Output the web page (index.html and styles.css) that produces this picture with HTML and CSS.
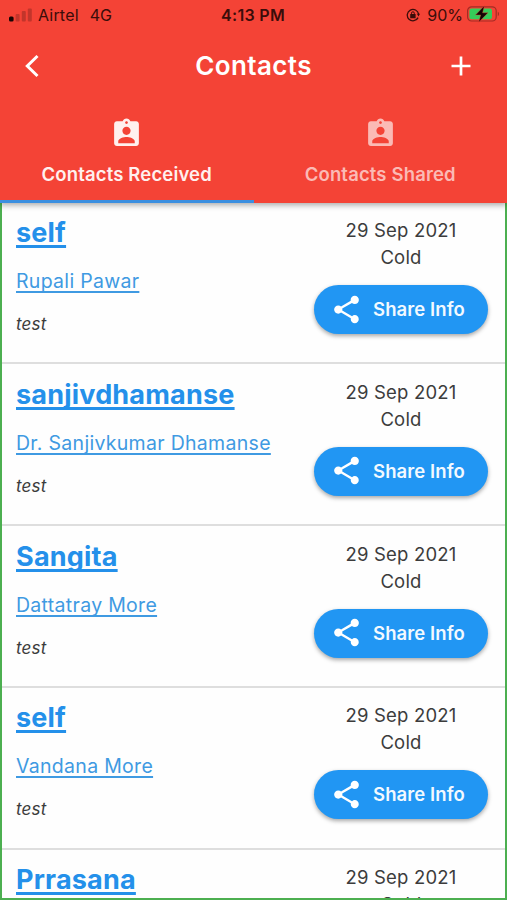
FILE: index.html
```html
<!DOCTYPE html>
<html lang="en">
<head>
  <meta charset="UTF-8">
  <meta name="viewport" content="width=device-width, initial-scale=1.0">
  <title>Contacts</title>
  <link rel="stylesheet" href="styles.css">
</head>
<body>
  <svg class="sprite" width="0" height="0">
    <symbol id="icon-share" viewBox="0 0 24 24">
      <path d="M18 16.08c-.76 0-1.44.3-1.96.77L8.91 12.7c.05-.23.09-.46.09-.7s-.04-.47-.09-.7l7.05-4.11c.54.5 1.25.81 2.04.81 1.66 0 3-1.34 3-3s-1.34-3-3-3-3 1.34-3 3c0 .24.04.47.09.7L8.04 9.81C7.5 9.31 6.79 9 6 9c-1.66 0-3 1.34-3 3s1.34 3 3 3c.79 0 1.5-.31 2.04-.81l7.12 4.16c-.05.21-.08.43-.08.65 0 1.61 1.31 2.92 2.92 2.92s2.92-1.31 2.92-2.92-1.31-2.92-2.92-2.92z"/>
    </symbol>
    <symbol id="icon-contact" viewBox="0 0 24 24">
      <path d="M19 3h-4.18C14.4 1.84 13.3 1 12 1s-2.4.84-2.82 2H5c-1.1 0-2 .9-2 2v14c0 1.1.9 2 2 2h14c1.1 0 2-.9 2-2V5c0-1.1-.9-2-2-2zm-7 0c.55 0 1 .45 1 1s-.45 1-1 1-1-.45-1-1 .45-1 1-1zm0 4c1.66 0 3 1.34 3 3s-1.34 3-3 3-3-1.34-3-3 1.34-3 3-3zm6 12H6v-1.4c0-2 4-3.1 6-3.1s6 1.1 6 3.1V19z"/>
    </symbol>
  </svg>

  <header class="header">
    <div class="status-bar">
      <div class="status-left">
        <svg class="signal" width="24" height="14" viewBox="0 0 24 14">
          <rect x="0" y="8.5" width="4.6" height="5" rx="1.5" fill="#170504"/>
          <rect x="6.6" y="6" width="4" height="7.5" rx="1" fill="#c2352b"/>
          <rect x="12.8" y="3" width="4" height="10.5" rx="1" fill="#c2352b"/>
          <rect x="18.8" y="0.5" width="4" height="13" rx="1" fill="#c2352b"/>
        </svg>
        <span class="carrier">Airtel</span>
        <span class="network">4G</span>
      </div>
      <span class="clock">4:13 PM</span>
      <div class="status-right">
        <svg class="lock" width="14" height="14" viewBox="0 0 14 14">
          <path d="M12.1 9.6A5.7 5.7 0 1 1 12.6 6.2" fill="none" stroke="#3a0d0a" stroke-width="1.3"/>
          <path d="M10.9 5.8h3.1l-1.5 2.6z" fill="#3a0d0a"/>
          <rect x="4.2" y="6" width="5.4" height="4.2" rx=".5" fill="#3a0d0a"/>
          <path d="M5.5 6.4V5.2a1.4 1.4 0 0 1 2.8 0v1.2" fill="none" stroke="#3a0d0a"/>
        </svg>
        <span class="percent">90%</span>
        <svg class="battery" width="33" height="18" viewBox="0 0 33 18">
          <rect x=".6" y="1.8" width="28.6" height="14.2" rx="4" fill="none" stroke="#a32c24" stroke-width="1.2"/>
          <path d="M30.8 6.8c1.6.5 1.6 3.7 0 4.2z" fill="#a32c24"/>
          <rect x="2.4" y="3.5" width="22.6" height="10.8" rx="2.2" fill="#35cc59"/>
          <path d="M17.4 .8L8.5 10h5.2l-2 7.2L21 7.8h-5.4z" fill="#120404" stroke="#f44336" stroke-width=".4"/>
        </svg>
      </div>
    </div>

    <div class="title-bar">
      <svg class="back" width="16" height="24" viewBox="0 0 16 24">
        <path d="M13.5 2L3.3 12 13.5 22" fill="none" stroke="#fff" stroke-width="3"/>
      </svg>
      <h1>Contacts</h1>
      <svg class="add" width="20" height="20" viewBox="0 0 20 20">
        <path d="M10 .5v19M.5 10h19" fill="none" stroke="#fff" stroke-width="2.7"/>
      </svg>
    </div>

    <nav class="tabs">
      <div class="tab active">
        <svg class="tab-icon"><use href="#icon-contact"/></svg>
        <span>Contacts Received</span>
      </div>
      <div class="tab">
        <svg class="tab-icon"><use href="#icon-contact"/></svg>
        <span>Contacts Shared</span>
      </div>
    </nav>
  </header>

  <main class="list">
    <div class="row">
      <div class="info">
        <a class="name">self</a>
        <a class="person">Rupali Pawar</a>
        <p class="note">test</p>
      </div>
      <div class="side">
        <span class="date">29 Sep 2021</span>
        <span class="state">Cold</span>
        <button class="share"><svg><use href="#icon-share"/></svg><span>Share Info</span></button>
      </div>
    </div>
    <div class="row">
      <div class="info">
        <a class="name">sanjivdhamanse</a>
        <a class="person">Dr. Sanjivkumar Dhamanse</a>
        <p class="note">test</p>
      </div>
      <div class="side">
        <span class="date">29 Sep 2021</span>
        <span class="state">Cold</span>
        <button class="share"><svg><use href="#icon-share"/></svg><span>Share Info</span></button>
      </div>
    </div>
    <div class="row">
      <div class="info">
        <a class="name">Sangita</a>
        <a class="person">Dattatray More</a>
        <p class="note">test</p>
      </div>
      <div class="side">
        <span class="date">29 Sep 2021</span>
        <span class="state">Cold</span>
        <button class="share"><svg><use href="#icon-share"/></svg><span>Share Info</span></button>
      </div>
    </div>
    <div class="row">
      <div class="info">
        <a class="name">self</a>
        <a class="person">Vandana More</a>
        <p class="note">test</p>
      </div>
      <div class="side">
        <span class="date">29 Sep 2021</span>
        <span class="state">Cold</span>
        <button class="share"><svg><use href="#icon-share"/></svg><span>Share Info</span></button>
      </div>
    </div>
    <div class="row">
      <div class="info">
        <a class="name">Prrasana</a>
      </div>
      <div class="side">
        <span class="date">29 Sep 2021</span>
        <span class="state">Cold</span>
      </div>
    </div>
  </main>
</body>
</html>
```

FILE: styles.css
```css
* {
  box-sizing: border-box;
}
body {
  font-family: Inter, 'Liberation Sans', sans-serif;
  display: flex;
  flex-direction: column;
  height: 900px;
  margin: 0;
  overflow: hidden;
  background: #fefefe;
  color: #3c3c3c;
}
.sprite {
  display: none;
}

/* Header */
.header {
  position: relative;
  z-index: 1;
  flex: none;
  height: 203px;
  background: #f44336;
  color: #fff;
  box-shadow: 0 2px 6px rgba(0, 0, 0, 0.35);
}
.status-bar {
  display: grid;
  grid-template-columns: 1fr auto 1fr;
  align-items: center;
  height: 30px;
  padding: 0 8px 0 9px;
  font-size: 16px;
  color: #3a0d0a;
}
.status-left {
  display: flex;
  align-items: center;
}
.carrier {
  margin-left: 5px;
  letter-spacing: 0.2px;
}
.network {
  margin-left: 11px;
}
.clock {
  margin-left: -2px;
  font-weight: 600;
  letter-spacing: 0.3px;
}
.status-right {
  display: flex;
  align-items: center;
  justify-content: flex-end;
}
.lock {
  margin-right: 7px;
}
.percent {
  margin-right: 4px;
}
.battery {
  margin: -2px -1px 0 0;
}
.title-bar {
  display: grid;
  grid-template-columns: 1fr auto 1fr;
  align-items: center;
  height: 72px;
  padding: 0 24px;
}
.add {
  justify-self: end;
  margin-right: 12px;
}
h1 {
  margin: 0;
  font-size: 26px;
  font-weight: 600;
  line-height: 32px;
  letter-spacing: 0.4px;
}
.tabs {
  display: flex;
  height: 101px;
}
.tab {
  flex: 1;
  display: flex;
  flex-direction: column;
  align-items: center;
  padding-top: 15px;
  border-bottom: 3px solid transparent;
  font-size: 18.5px;
  font-weight: 600;
  line-height: 24px;
  letter-spacing: 0.15px;
  color: #fbbab5;
}
.tab.active {
  color: #fff0ee;
  border-color: #3b8fe0;
}
.tab-icon {
  width: 33px;
  height: 33px;
  margin-bottom: 12px;
  fill: currentColor;
}

/* Contact list */
.list {
  flex: 1;
  overflow: hidden;
  border: 2px solid #4caf50;
  border-top: none;
}
.row {
  display: flex;
  justify-content: space-between;
  height: 161.8px;
  padding: 14px 17px 0 14px;
  border-bottom: 2px solid #dedede;
}
.row:first-child {
  height: 161.2px;
}
.row + .row {
  padding-top: 14.6px;
}
.info {
  display: flex;
  flex-direction: column;
  align-items: flex-start;
}
.name {
  font-size: 27px;
  font-weight: 700;
  line-height: 32px;
  letter-spacing: 0.2px;
  color: #2490ea;
  text-decoration: underline;
  text-decoration-thickness: 2.5px;
  text-underline-offset: 3px;
  text-decoration-skip-ink: none;
}
.person {
  margin-top: 20px;
  font-size: 19.5px;
  line-height: 24px;
  letter-spacing: 0.3px;
  color: #3f9ae2;
  text-decoration: underline;
  text-decoration-thickness: 1.5px;
  text-underline-offset: 3px;
  text-decoration-skip-ink: none;
}
.note {
  margin: 19px 0 0;
  font-size: 17px;
  font-style: italic;
  line-height: 24px;
  letter-spacing: 0.2px;
}
.side {
  display: flex;
  flex-direction: column;
  align-items: center;
  width: 174px;
  font-size: 18.5px;
  line-height: 27px;
  letter-spacing: 0.2px;
}
.share {
  display: flex;
  align-items: center;
  width: 174px;
  height: 49px;
  margin-top: 14px;
  padding: 0 0 1px 16px;
  border: none;
  border-radius: 25px;
  background: #2196f3;
  color: #f2f9ff;
  font-family: inherit;
  font-size: 18.5px;
  font-weight: 600;
  letter-spacing: 0.1px;
  box-shadow: 0 2px 4px rgba(0, 0, 0, 0.35);
}
.share svg {
  width: 33px;
  height: 33px;
  margin-right: 10px;
  fill: #fff;
}
```
